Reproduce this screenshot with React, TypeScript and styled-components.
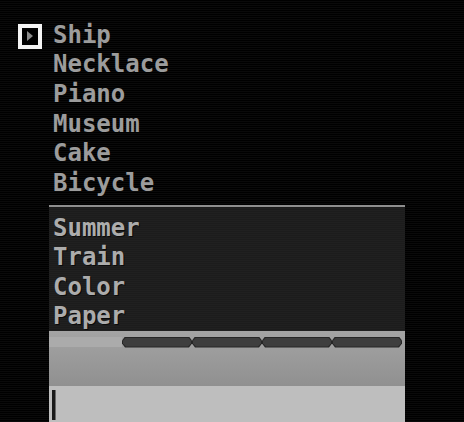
import styled, { createGlobalStyle } from 'styled-components';

const GlobalStyle = createGlobalStyle`
  html, body {
    margin: 0;
    padding: 0;
    background: #000;
  }
  body {
    font-family: "DejaVu Sans Mono", "Liberation Mono", monospace;
  }
`;

const Screen = styled.div`
  width: 464px;
  height: 422px;
  overflow: hidden;
  background: repeating-linear-gradient(to bottom, #000 0 1px, #0a0a0a 1px 2px);
  padding-top: 20px;
  box-sizing: border-box;
`;

const MenuList = styled.ul`
  list-style: none;
  margin: 0;
  padding: 0;
`;

const MenuItem = styled.li`
  display: flex;
  align-items: center;
  height: 29.6px;
  font-size: 24px;
  font-weight: bold;
  color: #9c9c9c;
`;

const MarkerSlot = styled.div`
  width: 53px;
  flex-shrink: 0;
  display: flex;
  align-items: center;
  padding-left: 18px;
  box-sizing: border-box;
`;

const Marker = styled.div`
  width: 24px;
  height: 25px;
  flex-shrink: 0;
  margin-top: 3px;
  border: 4px solid #f4f4f4;
  box-sizing: border-box;
  background: #000;
  display: flex;
  align-items: center;
  padding-left: 5px;
`;

const Arrow = styled.div`
  width: 0;
  height: 0;
  border-top: 5px solid transparent;
  border-bottom: 5px solid transparent;
  border-left: 6px solid #8a8a8a;
`;

const Panel = styled.div`
  width: 356px;
  margin: 7px 0 0 49px;
  display: flex;
  flex-direction: column;
`;

const History = styled.div`
  border-top: 2px solid #8e8e8e;
  background: repeating-linear-gradient(to bottom, #1c1c1c 0 1px, #202020 1px 2px);
  padding: 7px 0 0 4px;
  height: 126px;
  box-sizing: border-box;
`;

const HistoryLine = styled.div`
  height: 29.6px;
  line-height: 29.6px;
  font-size: 24px;
  font-weight: bold;
  color: #acacac;
  text-shadow: 1px 1px 0 #0a0a0a;
`;

const Status = styled.div`
  height: 55px;
  background: linear-gradient(to bottom, #a4a4a4 0, #9c9c9c 40%, #909090 100%);
  padding-top: 6px;
  box-sizing: border-box;
`;

const Progress = styled.div`
  display: flex;
  align-items: center;
  height: 11px;
`;

const ProgressTrack = styled.div`
  width: 73px;
  height: 10px;
  background: #ababab;
`;

const Segment = styled.div`
  width: 70px;
  height: 11px;
  background: #262626;
  clip-path: polygon(3px 0, 67px 0, 70px 4px, 70px 7px, 67px 11px, 3px 11px, 0 7px, 0 4px);
  display: flex;
  align-items: center;
  justify-content: center;

  &::before {
    content: '';
    width: 68px;
    height: 9px;
    background: #3e3e3e;
    clip-path: polygon(3px 0, 65px 0, 68px 3px, 68px 6px, 65px 9px, 3px 9px, 0 6px, 0 3px);
  }
`;

const Input = styled.div`
  height: 37px;
  background: #bebebe;
  padding: 4px 0 0 3px;
  box-sizing: border-box;
`;

const Caret = styled.div`
  width: 3px;
  height: 30px;
  background: #1a1a1a;
  box-shadow: 1px 0 0 #6a6a6a;
`;

const items = ['Ship', 'Necklace', 'Piano', 'Museum', 'Cake', 'Bicycle'];
const history = ['Summer', 'Train', 'Color', 'Paper'];

export default function App() {
  return (
    <>
      <GlobalStyle />
      <Screen>
        <MenuList>
          {items.map((item, i) => (
            <MenuItem key={item}>
              <MarkerSlot>
                {i === 0 && (
                  <Marker>
                    <Arrow />
                  </Marker>
                )}
              </MarkerSlot>
              {item}
            </MenuItem>
          ))}
        </MenuList>
        <Panel>
          <History>
            {history.map(h => (
              <HistoryLine key={h}>{h}</HistoryLine>
            ))}
          </History>
          <Status>
            <Progress>
              <ProgressTrack />
              {[0, 1, 2, 3].map(n => (
                <Segment key={n} />
              ))}
            </Progress>
          </Status>
          <Input>
            <Caret />
          </Input>
        </Panel>
      </Screen>
    </>
  );
}
